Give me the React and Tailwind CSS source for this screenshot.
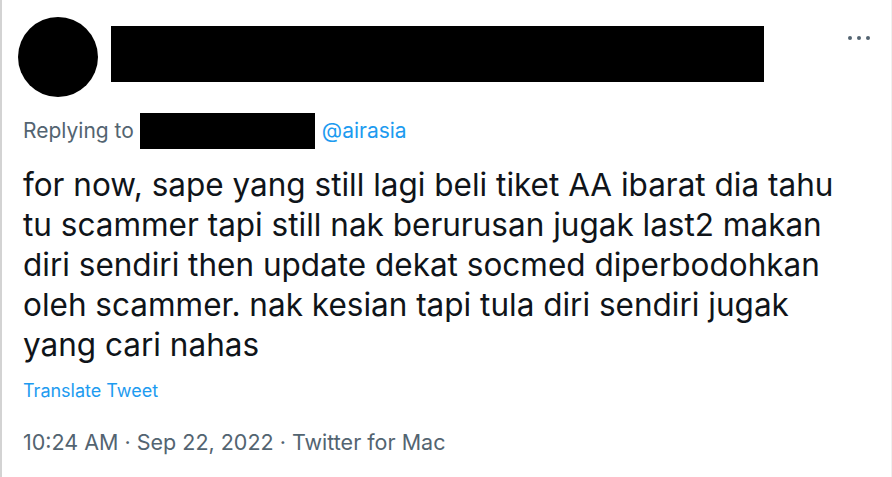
import React from 'react'

const TweetMenu = () => (
  <div className="flex items-center gap-[5px] pt-[19px]">
    <span className="w-1 h-1 rounded-full bg-[#536471]" />
    <span className="w-1 h-1 rounded-full bg-[#536471]" />
    <span className="w-1 h-1 rounded-full bg-[#536471]" />
  </div>
)

export default function App() {
  return (
    <div
      className="w-[892px] h-[477px] bg-white border-l-2 border-[#d3d3d3] border-r border-r-[#f0f0f0] text-[#0f1419] overflow-hidden"
      style={{ fontFamily: 'Inter, "Noto Sans", sans-serif' }}
    >
      {/* header: avatar, redacted name, menu */}
      <div className="flex items-start pl-4 pr-[21px] pt-[17px]">
        <div className="w-20 h-20 rounded-full bg-black shrink-0" />
        <div className="w-[653px] h-14 bg-black mt-[9px] ml-[13px]" />
        <div className="ml-auto">
          <TweetMenu />
        </div>
      </div>

      {/* replying to */}
      <div className="flex items-center h-9 mt-4 pl-[21px] text-[21px] leading-9 text-[#536471]">
        <span>Replying to</span>
        <span className="w-[175px] h-9 bg-black ml-[6px]" />
        <span className="ml-[7px] text-[#1d9bf0]">@airasia</span>
      </div>

      {/* tweet body */}
      <p className="mt-4 pl-[21px] text-[31.5px] leading-10 whitespace-nowrap">
        for now, sape yang still lagi beli tiket AA ibarat dia tahu
        <br />
        tu scammer tapi still nak berurusan jugak last2 makan
        <br />
        diri sendiri then update dekat socmed diperbodohkan
        <br />
        oleh scammer. nak kesian tapi tula diri sendiri jugak
        <br />
        yang cari nahas
      </p>

      <div className="mt-[14px] pl-[21px] text-[18px] leading-6 text-[#1d9bf0]">
        Translate Tweet
      </div>

      <div className="mt-[25px] pl-[21px] text-[21.5px] leading-7 text-[#536471]">
        10:24 AM · Sep 22, 2022 · Twitter for Mac
      </div>
    </div>
  )
}
